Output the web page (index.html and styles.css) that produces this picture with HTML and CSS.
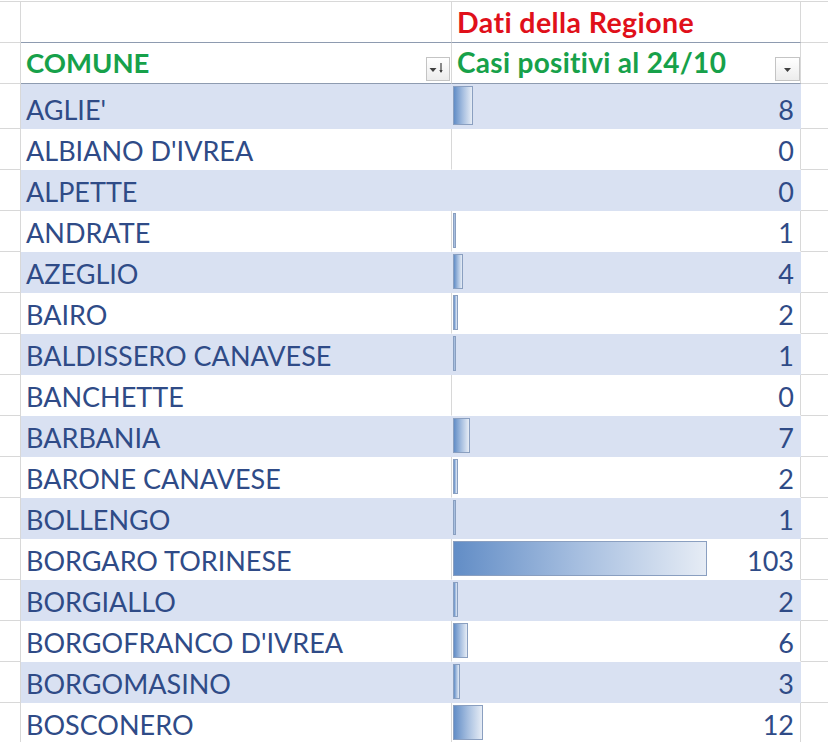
FILE: index.html
```html
<!DOCTYPE html>
<html lang="it">
<head>
<meta charset="utf-8">
<title>Casi positivi per comune</title>
<link rel="stylesheet" href="styles.css">
</head>
<body>
<div class="sheet">
  <div class="row head1">
    <div class="cell ca"></div>
    <div class="cell cb"></div>
    <div class="cell cc"><span class="title-red">Dati della Regione</span></div>
    <div class="cell cd"></div>
  </div>
  <div class="row head2">
    <div class="cell ca"></div>
    <div class="cell cb">
      <span class="title-green">COMUNE</span>
      <span class="filter">
        <svg width="24" height="24" viewBox="0 0 24 24"><path d="M3.5 11h7l-3.5 4z" fill="#404040"/><path d="M15 6v9" stroke="#404040" stroke-width="1.2"/><path d="M13.3 13h3.4L15 16z" fill="#404040"/></svg>
      </span>
    </div>
    <div class="cell cc">
      <span class="title-green casi">Casi positivi al 24/10</span>
      <span class="filter wide">
        <svg width="25" height="24" viewBox="0 0 25 24"><path d="M9 11h7l-3.5 4z" fill="#404040"/></svg>
      </span>
    </div>
    <div class="cell cd"></div>
  </div>

  <div class="row data first band">
    <div class="cell ca"></div>
    <div class="cell cb">AGLIE'</div>
    <div class="cell cc"><span class="bar" style="width:19.7px"></span><span class="num">8</span></div>
    <div class="cell cd"></div>
  </div>
  <div class="row data">
    <div class="cell ca"></div>
    <div class="cell cb">ALBIANO D'IVREA</div>
    <div class="cell cc"><span class="num">0</span></div>
    <div class="cell cd"></div>
  </div>
  <div class="row data band">
    <div class="cell ca"></div>
    <div class="cell cb">ALPETTE</div>
    <div class="cell cc"><span class="num">0</span></div>
    <div class="cell cd"></div>
  </div>
  <div class="row data">
    <div class="cell ca"></div>
    <div class="cell cb">ANDRATE</div>
    <div class="cell cc"><span class="bar" style="width:2.5px"></span><span class="num">1</span></div>
    <div class="cell cd"></div>
  </div>
  <div class="row data band">
    <div class="cell ca"></div>
    <div class="cell cb">AZEGLIO</div>
    <div class="cell cc"><span class="bar" style="width:9.9px"></span><span class="num">4</span></div>
    <div class="cell cd"></div>
  </div>
  <div class="row data">
    <div class="cell ca"></div>
    <div class="cell cb">BAIRO</div>
    <div class="cell cc"><span class="bar" style="width:4.9px"></span><span class="num">2</span></div>
    <div class="cell cd"></div>
  </div>
  <div class="row data band">
    <div class="cell ca"></div>
    <div class="cell cb">BALDISSERO CANAVESE</div>
    <div class="cell cc"><span class="bar" style="width:2.5px"></span><span class="num">1</span></div>
    <div class="cell cd"></div>
  </div>
  <div class="row data">
    <div class="cell ca"></div>
    <div class="cell cb">BANCHETTE</div>
    <div class="cell cc"><span class="num">0</span></div>
    <div class="cell cd"></div>
  </div>
  <div class="row data band">
    <div class="cell ca"></div>
    <div class="cell cb">BARBANIA</div>
    <div class="cell cc"><span class="bar" style="width:17.3px"></span><span class="num">7</span></div>
    <div class="cell cd"></div>
  </div>
  <div class="row data">
    <div class="cell ca"></div>
    <div class="cell cb">BARONE CANAVESE</div>
    <div class="cell cc"><span class="bar" style="width:4.9px"></span><span class="num">2</span></div>
    <div class="cell cd"></div>
  </div>
  <div class="row data band">
    <div class="cell ca"></div>
    <div class="cell cb">BOLLENGO</div>
    <div class="cell cc"><span class="bar" style="width:2.5px"></span><span class="num">1</span></div>
    <div class="cell cd"></div>
  </div>
  <div class="row data">
    <div class="cell ca"></div>
    <div class="cell cb">BORGARO TORINESE</div>
    <div class="cell cc"><span class="bar" style="width:254px"></span><span class="num">103</span></div>
    <div class="cell cd"></div>
  </div>
  <div class="row data band">
    <div class="cell ca"></div>
    <div class="cell cb">BORGIALLO</div>
    <div class="cell cc"><span class="bar" style="width:4.9px"></span><span class="num">2</span></div>
    <div class="cell cd"></div>
  </div>
  <div class="row data">
    <div class="cell ca"></div>
    <div class="cell cb">BORGOFRANCO D'IVREA</div>
    <div class="cell cc"><span class="bar" style="width:14.8px"></span><span class="num">6</span></div>
    <div class="cell cd"></div>
  </div>
  <div class="row data band">
    <div class="cell ca"></div>
    <div class="cell cb">BORGOMASINO</div>
    <div class="cell cc"><span class="bar" style="width:7.4px"></span><span class="num">3</span></div>
    <div class="cell cd"></div>
  </div>
  <div class="row data">
    <div class="cell ca"></div>
    <div class="cell cb">BOSCONERO</div>
    <div class="cell cc"><span class="bar" style="width:29.6px"></span><span class="num">12</span></div>
    <div class="cell cd"></div>
  </div>
</div>
</body>
</html>
```

FILE: styles.css
```css
* { box-sizing: border-box; }

html, body {
  margin: 0;
  padding: 0;
  background: #ffffff;
}

body {
  width: 828px;
  height: 742px;
  overflow: hidden;
  font-family: "Lato", "Open Sans", sans-serif;
}

.sheet {
  padding-top: 1px;
  display: flex;
  flex-direction: column;
}

.row {
  display: flex;
  height: 41px;
  flex: none;
}

.cell {
  position: relative;
  display: flex;
  align-items: flex-end;
  border-right: 1px solid #d8d8d8;
  border-bottom: 1px solid #d8d8d8;
  font-size: 27px;
  line-height: 1;
  color: #2f4b87;
  white-space: nowrap;
}

.ca { width: 21px; flex: none; }
.cb { width: 431px; flex: none; padding-left: 5px; }
.cc { width: 349px; flex: none; padding-left: 5px; padding-right: 6px; }
.cd { flex: 1; border-right: none; }

/* header rows */
.head1 {
  height: 42px;
  border-top: 1px solid #d8d8d8;
}
.head1 .cell { padding-bottom: 6px; }
.head1 .cb, .head1 .cc { border-bottom-color: #8e9bb0; }

.head2 .cell { padding-bottom: 7px; }
.head2 .cb, .head2 .cc { border-bottom-color: #8e9bb0; }

.title-red {
  color: #e0101a;
  font-weight: 700;
  font-size: 28.5px;
  letter-spacing: 0.4px;
}
.title-green {
  color: #17a14a;
  font-weight: 700;
  font-size: 27.5px;
}
.title-green.casi {
  font-size: 28px;
  letter-spacing: 0.3px;
}

.filter {
  position: absolute;
  right: 1px;
  bottom: 2px;
  width: 24px;
  height: 24px;
  border: 1px solid #c4c4c4;
  background: linear-gradient(#ffffff, #ececec);
  display: flex;
}
.filter.wide {
  right: 0;
  width: 25px;
}
.filter svg { margin: -1px; }

/* data rows */
.data .cell { padding-bottom: 5px; }
.data .cb, .data .cc { border-bottom-color: transparent; }
.data.first { height: 45px; }

.band .cb, .band .cc {
  background: #d9e1f2;
  border-right-color: transparent;
}
.band .cc { border-right-color: #d9e1f2; }

.cc .num {
  margin-left: auto;
}

.bar {
  position: absolute;
  left: 1px;
  top: 2px;
  bottom: 3px;
  border: 1px solid #8a9fc0;
  background: linear-gradient(90deg, #628dc6 0%, #a7bfe0 50%, #e6ecf5 100%);
}
```
